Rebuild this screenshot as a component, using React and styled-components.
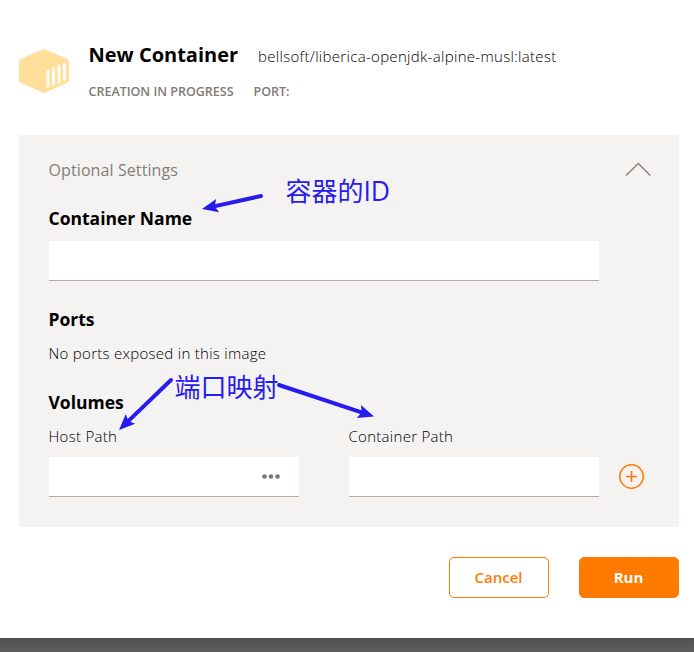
import React from 'react';
import styled, { createGlobalStyle } from 'styled-components';

const Global = createGlobalStyle`
  * { box-sizing: border-box; }
  body { margin: 0; background: #5c5c5c; overflow: hidden; }
`;

const Backdrop = styled.div`
  height: 652px;
  background: linear-gradient(to bottom, #505050 638px, #5f5f5f 652px);
  font-family: 'Open Sans', 'Noto Sans', sans-serif;
`;

const Dialog = styled.main`
  position: relative;
  height: 638px;
  padding: 40px 15px 0 19px;
  background: #fff;
`;

const Header = styled.header`
  display: flex;
  height: 95px;
`;

const Logo = styled.svg`
  width: 50px;
  height: 46px;
  margin: 8px 19.5px 0 0;
`;

const Heading = styled.div`
  display: flex;
  flex-direction: column;
  white-space: nowrap;
`;

const TitleRow = styled.div`
  display: flex;
  align-items: baseline;
  height: 42px;
`;

const Title = styled.h1`
  margin: 0;
  width: 169.5px;
  font-size: 20px;
  line-height: 30px;
  font-weight: 700;
  color: #000;
`;

const ImageName = styled.span`
  font-size: 15px;
  line-height: 30px;
  font-weight: 300;
  letter-spacing: 0.31px;
  color: #000;
`;

const StatusRow = styled.div`
  display: flex;
  gap: 20px;
  font-size: 12.5px;
  line-height: 19px;
  font-weight: 600;
  color: #7f7a74;
`;

const Panel = styled.section`
  height: 392px;
  padding: 20px 28px 0 30px;
  background: #f4f3f2;
`;

const PanelHeader = styled.div`
  display: flex;
  justify-content: space-between;
  height: 48px;
  font-size: 16px;
  line-height: 30px;
  letter-spacing: 0.1px;
  text-indent: -0.5px;
  color: #837e79;
`;

const Chevron = styled.svg`
  width: 26px;
  height: 15px;
  margin-top: 7px;
`;

const Section = styled.div`
  height: ${(p) => p.$height}px;
`;

const SectionTitle = styled.h2`
  margin: 0;
  height: ${(p) => p.$height || 34}px;
  font-size: 17.5px;
  line-height: 30px;
  font-weight: 700;
  text-indent: -0.5px;
  color: #000;
`;

const Label = styled.div`
  height: 36px;
  font-size: 15px;
  line-height: 30px;
  font-weight: 300;
  letter-spacing: 0.28px;
  text-indent: -0.5px;
  color: #000;
`;

const Field = styled.div`
  display: flex;
  align-items: center;
  justify-content: flex-end;
  width: ${(p) => p.$width}px;
  height: 40px;
  padding-right: 18px;
  background: #fff;
  border-bottom: 1px solid #b8ad9e;
`;

const VolumeRow = styled.div`
  display: flex;
  align-items: flex-end;
`;

const Column = styled.div`
  width: ${(p) => p.$width}px;
`;

const IconButton = styled.button`
  display: flex;
  padding: 0;
  margin-bottom: 7px;
  border: 0;
  background: none;
`;

const Actions = styled.footer`
  display: flex;
  justify-content: flex-end;
  gap: 30px;
  padding-top: 30px;
`;

const Button = styled.button`
  width: 100px;
  height: 41px;
  padding: 0 1px 0 0;
  border: 1px solid #ff7b00;
  border-radius: 5px;
  background: ${(p) => (p.$primary ? '#ff7b00' : '#fff')};
  color: ${(p) => (p.$primary ? '#fff' : '#ff7b00')};
  font: ${(p) => (p.$primary ? 700 : 600)} 15px/39px 'Open Sans', sans-serif;
`;

const Arrows = styled.svg`
  position: absolute;
  left: 0;
  top: 0;
  pointer-events: none;
`;

const Note = styled.span`
  position: absolute;
  left: ${(p) => p.$x}px;
  top: ${(p) => p.$y}px;
  font: 400 26px/36px 'Noto Sans', 'Noto Sans CJK SC', sans-serif;
  color: #281bee;
  white-space: nowrap;
`;

const Latin = styled.span`
  font-family: 'Open Sans', sans-serif;
  font-weight: 400;
  font-size: 26.5px;
  letter-spacing: -0.2px;
`;

const arrows = [
  { x1: 261, y1: 196, x2: 202, y2: 209 },
  { x1: 171, y1: 380, x2: 119, y2: 430 },
  { x1: 279, y1: 385, x2: 374, y2: 416.5 },
];

function Arrow({ x1, y1, x2, y2 }) {
  const angle = (Math.atan2(y2 - y1, x2 - x1) * 180) / Math.PI;
  const length = Math.hypot(x2 - x1, y2 - y1);
  return (
    <g transform={`translate(${x2} ${y2}) rotate(${angle})`}>
      <path d={`M${-length} 0H-10`} stroke="#281bee" strokeWidth="4" strokeLinecap="round" />
      <path d="M0 0L-16 -6.8L-13 0L-16 6.8Z" fill="#281bee" />
    </g>
  );
}

export default function App() {
  return (
    <Backdrop>
      <Global />
      <Dialog>
        <Header>
          <Logo viewBox="0 0 50 46">
            <path
              d="M23 1.7Q25 .6 27 1.7L48.4 11Q50 11.8 50 13.5V32.5Q50 34 48.4 34.8L27 44.3Q25 45.3 23 44.3L1.6 34.8Q0 34 0 32.5V13.5Q0 11.8 1.6 11Z"
              fill="#ffdf99"
            />
            <path d="M29 23.3V38.2M34.5 20.8V35.8M40 18.3V33.8M45.5 16.3V31.3" stroke="#fff" strokeWidth="2.8" strokeLinecap="round" />
          </Logo>
          <Heading>
            <TitleRow>
              <Title>New Container</Title>
              <ImageName>bellsoft/liberica-openjdk-alpine-musl:latest</ImageName>
            </TitleRow>
            <StatusRow>
              <span>CREATION IN PROGRESS</span>
              <span>PORT:</span>
            </StatusRow>
          </Heading>
        </Header>
        <Panel>
          <PanelHeader>
            <span>Optional Settings</span>
            <Chevron viewBox="0 0 26 15" fill="none" stroke="#8d8276" strokeWidth="1.5">
              <path d="M1 13.5L13.3 1.5L25.3 13.5" />
            </Chevron>
          </PanelHeader>
          <Section $height={101}>
            <SectionTitle $height={38}>Container Name</SectionTitle>
            <Field $width={550} />
          </Section>
          <Section $height={83}>
            <SectionTitle>Ports</SectionTitle>
            <Label>No ports exposed in this image</Label>
          </Section>
          <SectionTitle>Volumes</SectionTitle>
          <VolumeRow>
            <Column $width={300}>
              <Label>Host Path</Label>
              <Field $width={250}>
                <svg width="20" height="8" fill="#777">
                  <circle cx="3.5" cy="3.5" r="2.3" />
                  <circle cx="10" cy="3.5" r="2.3" />
                  <circle cx="16.5" cy="3.5" r="2.3" />
                </svg>
              </Field>
            </Column>
            <Column $width={270}>
              <Label>Container Path</Label>
              <Field $width={250} />
            </Column>
            <IconButton aria-label="Add volume">
              <svg width="26" height="26" fill="none" stroke="#ff7b00" strokeWidth="1.6">
                <circle cx="12.5" cy="12.5" r="11.7" />
                <path d="M12.5 7V18M7 12.5H18" />
              </svg>
            </IconButton>
          </VolumeRow>
        </Panel>
        <Actions>
          <Button>Cancel</Button>
          <Button $primary>Run</Button>
        </Actions>
        <Arrows width="694" height="638" fill="none">
          {arrows.map((a) => (
            <Arrow key={a.x1} {...a} />
          ))}
        </Arrows>
        <Note $x={285.5} $y={173}>
          容器的<Latin>ID</Latin>
        </Note>
        <Note $x={174.5} $y={369}>端口映射</Note>
      </Dialog>
    </Backdrop>
  );
}
